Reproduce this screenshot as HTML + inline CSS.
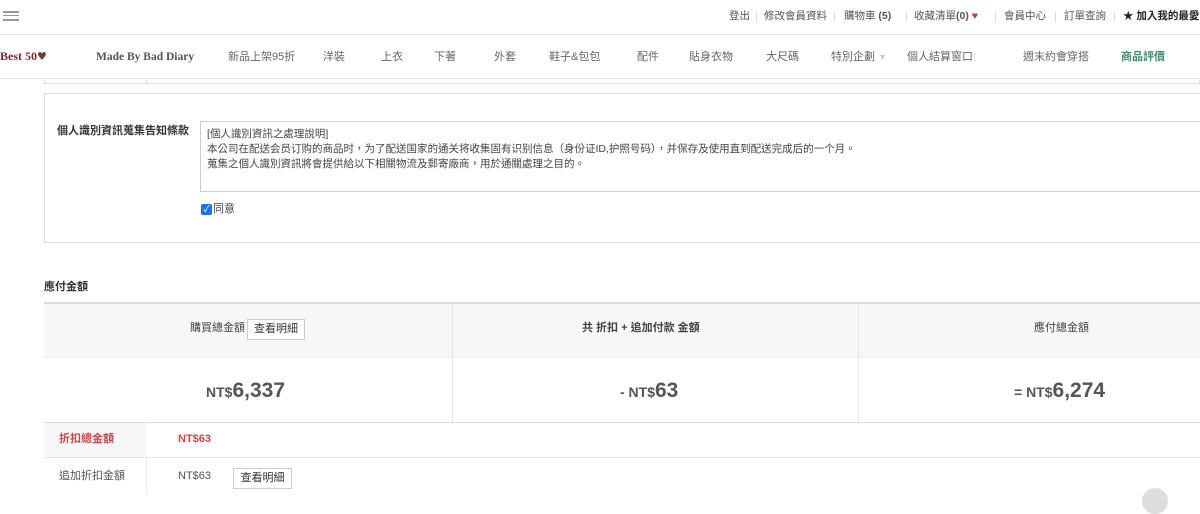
<!DOCTYPE html>
<html><head><meta charset="utf-8"><style>
*{margin:0;padding:0;box-sizing:border-box}
body{width:1200px;height:493px;overflow:hidden;background:#fff;font-family:"Liberation Sans","Noto Sans CJK TC",sans-serif;color:#444;font-size:11px;position:relative;line-height:1.3}
.a{position:absolute;white-space:nowrap}
.a *{white-space:nowrap}
.top{top:0;left:0;width:1200px;height:35px;border-bottom:1px solid #e3e3e3}
.nav{top:35px;left:0;width:1200px;height:44px;border-bottom:1px solid #e6e6e6;background:#fff}
.nav span{position:absolute;top:15px;font-size:11px;color:#666}
.nav span span{position:static}
.tl{top:10px;font-size:10.5px;color:#555}
.sep{top:12px;width:1px;height:10px;background:#ddd}
</style></head><body>
<div class="a top"></div>
<div class="a" style="left:3px;top:11px;width:16px;height:2px;background:#999"></div>
<div class="a" style="left:3px;top:15px;width:16px;height:1px;background:#999"></div>
<div class="a" style="left:3px;top:19px;width:16px;height:2px;background:#999"></div>
<span class="a tl" style="left:729px">登出</span><div class="a sep" style="left:756px"></div>
<span class="a tl" style="left:764px">修改會員資料</span><div class="a sep" style="left:834px"></div>
<span class="a tl" style="left:844px">購物車 <b>(5)</b></span><div class="a sep" style="left:906px"></div>
<span class="a tl" style="left:914px">收藏清單<b>(0)</b> <span style="color:#d2335c">♥</span></span><div class="a sep" style="left:995px"></div>
<span class="a tl" style="left:1004px">會員中心</span><div class="a sep" style="left:1055px"></div>
<span class="a tl" style="left:1064px">訂單查詢</span><div class="a sep" style="left:1114px"></div>
<span class="a tl" style="left:1123px;color:#222;font-weight:bold">★ 加入我的最愛</span>
<div class="a nav">
<span style="left:0;color:#7a2a33;font-weight:bold;font-family:'Liberation Serif',serif;font-size:12px;top:14px;width:70px">Best 50<span style="color:#6b4326;font-family:'DejaVu Sans',sans-serif">♥</span></span>
<span style="left:96px;font-family:'Liberation Serif',serif;font-weight:bold;color:#555;font-size:11.5px">Made By Bad Diary</span>
<span style="left:228px">新品上架95折</span>
<span style="left:323px">洋裝</span>
<span style="left:381px">上衣</span>
<span style="left:434px">下著</span>
<span style="left:494px">外套</span>
<span style="left:549px">鞋子&amp;包包</span>
<span style="left:637px">配件</span>
<span style="left:689px">貼身衣物</span>
<span style="left:766px">大尺碼</span>
<span style="left:831px;width:70px">特別企劃 <span style="color:#ccc;font-size:9px">▼</span></span>
<span style="left:907px;width:80px">個人結算窗口<span style="color:#ddd">|</span></span>
<span style="left:1023px">週末約會穿搭</span>
<span style="left:1121px;color:#3e8a6b;font-weight:bold">商品評價</span>
</div>
<div class="a" style="left:44px;top:80px;width:1156px;height:4px;border:1px solid #ddd;border-top:none"></div>
<div class="a" style="left:146px;top:80px;width:1px;height:4px;background:#ddd"></div>
<div class="a" style="left:44px;top:93px;width:1160px;height:150px;border:1px solid #ddd"></div>
<span class="a" style="left:57px;top:124px;font-size:11px;color:#333;font-weight:bold">個人識別資訊蒐集告知條款</span>
<div class="a" style="left:200px;top:121px;width:1004px;height:71px;border:1px solid #ccc;padding:5px 6px;font-size:10.5px;line-height:15px;color:#444">[個人識別資訊之處理說明]<br>本公司在配送会员订购的商品时，为了配送国家的通关将收集固有识别信息（身份证ID,护照号码），并保存及使用直到配送完成后的一个月。<br>蒐集之個人識別資訊將會提供給以下相關物流及郵寄廠商，用於通關處理之目的。</div>
<div class="a" style="left:201px;top:204px;width:11px;height:11px;background:#1a73e8;border-radius:2px;color:#fff;font-size:9px;line-height:11px;text-align:center">✓</div>
<span class="a" style="left:213px;top:202px;font-size:11px;color:#444">同意</span>
<span class="a" style="left:44px;top:280px;font-size:11px;font-weight:bold;color:#333">應付金額</span>
<div class="a" style="left:44px;top:302px;width:1160px;height:56px;background:#f7f7f7;border-top:2px solid #ddd;border-bottom:1px solid #eee"></div>
<div class="a" style="left:452px;top:304px;width:1px;height:118px;background:#e6e6e6"></div>
<div class="a" style="left:858px;top:304px;width:1px;height:118px;background:#e6e6e6"></div>
<span class="a" style="left:190px;top:321px;font-size:11px;color:#444">購買總金額</span>
<div class="a" style="left:247px;top:319px;width:58px;height:21px;border:1px solid #ccc;background:#fff;font-size:11px;text-align:center;line-height:19px;color:#333">查看明細</div>
<span class="a" style="left:582px;top:321px;font-size:11px;color:#444;font-weight:bold">共 折扣 + 追加付款 金額</span>
<span class="a" style="left:1034px;top:321px;font-size:11px;color:#444">應付總金額</span>
<span class="a" style="left:206px;top:377px;color:#555;font-weight:bold;font-size:14px">NT$<span style="font-size:21px">6,337</span></span>
<span class="a" style="left:620px;top:377px;color:#555;font-weight:bold;font-size:14px">- NT$<span style="font-size:21px">63</span></span>
<span class="a" style="left:1014px;top:377px;color:#555;font-weight:bold;font-size:14px">= NT$<span style="font-size:21px">6,274</span></span>
<div class="a" style="left:44px;top:422px;width:1160px;height:36px;background:#fff;border-top:1px solid #ddd;border-bottom:1px solid #e6e6e6"></div>
<div class="a" style="left:44px;top:423px;width:102px;height:34px;background:#f7f7f7"></div>
<span class="a" style="left:59px;top:432px;color:#c9484b;font-weight:bold;font-size:11px">折扣總金額</span>
<span class="a" style="left:178px;top:432px;color:#c9484b;font-weight:bold;font-size:11px">NT$63</span>
<div class="a" style="left:146px;top:458px;width:1px;height:35px;background:#e6e6e6"></div>
<span class="a" style="left:59px;top:469px;color:#555;font-size:11px">追加折扣金額</span>
<span class="a" style="left:178px;top:469px;color:#555;font-size:11px">NT$63</span>
<div class="a" style="left:233px;top:468px;width:59px;height:21px;border:1px solid #ccc;background:#fff;font-size:11px;text-align:center;line-height:19px;color:#333">查看明細</div>
<div class="a" style="left:1142px;top:488px;width:26px;height:26px;border-radius:50%;background:#ddd"></div>
</body></html>
